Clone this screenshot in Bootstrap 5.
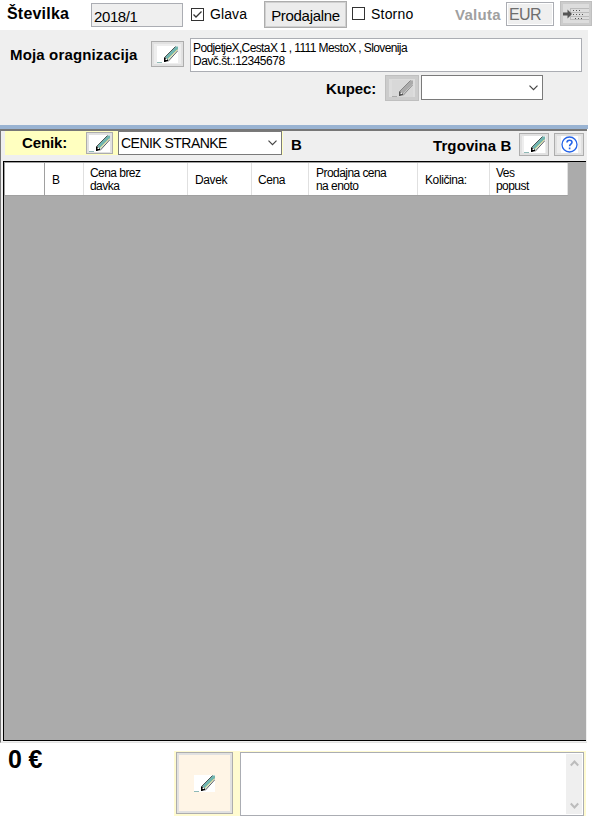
<!DOCTYPE html>
<html lang="sl">
<head>
<meta charset="utf-8">
<meta name="viewport" content="width=device-width, initial-scale=1">
<title>Številka 2018/1</title>
<link href="https://cdn.jsdelivr.net/npm/bootstrap@5.3.0/dist/css/bootstrap.min.css" rel="stylesheet">
<style>
body{width:593px;height:816px;overflow:hidden;background:#fff;color:#000;font-family:"Liberation Sans",Arial,sans-serif;font-size:14px;line-height:16px}
.lbl{white-space:nowrap;flex:none;overflow:visible}
.heavy{font-weight:700;font-size:15px}
.field{flex:none;border:1px solid #abadb3;border-radius:0;background:#fff;color:#000;white-space:nowrap;line-height:1}
.face{flex:none;display:flex;align-items:center;justify-content:center;padding:0;border:1px solid #adadad;border-radius:0;background:#eee;box-shadow:inset 0 0 0 2px #e1e1e1;color:#000;line-height:1}
.face.off{background:#ddd;border-color:#bfbfbf;box-shadow:inset 0 0 0 3px #ccc}
.face svg,.field svg{display:block;flex:none}
.tick{flex:none;width:13px;height:13px;border:1px solid #333;background:#fff}
.tick svg{display:block}
.topbar{height:30px}
.head{height:95px;width:588px;background:#efefef}
.band{height:4px;width:588px;background:#99b3d2}
.body-panel{width:587px;height:614px;background:#efefef;border-top:2px solid #777;border-left:1px solid #777;border-bottom:1px solid #e3e3e3}
.pricebar{height:30px}
.yellow{width:278px;height:24px;background:#ffffc0}
.sheet{margin-left:2px;width:583px;height:580px;border:1px solid #000;border-right:0;background:#ababab}
.heads{height:34px;width:564px;border-top:1px solid #a0a0a0;border-left:1px solid #a0a0a0;border-bottom:1px solid #a0a0a0;background:#fff;font-size:12px;line-height:13px}
.heads>div{flex:none;display:flex;align-items:center;padding-top:2px;border-right:1px solid #e0e0e0;white-space:nowrap;letter-spacing:-.55px}
.sum{font-size:25px;font-weight:700;line-height:28px}
.note{width:412px;height:65px;background:#fffbd0}
/* top bar */
#t1{font-size:16px;width:84px;margin-left:7px;margin-top:6px;letter-spacing:.2px}
#num{width:92px;height:24px;margin-top:3px;background:#efefef;padding:5px 2px;font-size:15px;letter-spacing:-.4px}
#c1{margin:8px 6px 0 8px}
#t2{width:54px;margin-top:6px;letter-spacing:.1px}
#shops{width:83px;height:27px;margin-top:1px;font-size:15px;letter-spacing:-.3px;box-shadow:inset 0 0 0 1px #d0d0d0;background:#ececec;padding-top:1px}
#c2{margin:7px 6px 0 5px}
#t3{width:84px;margin-top:6px;letter-spacing:.2px}
#t4{width:51px;margin-top:7px;color:#a0a0a0;letter-spacing:.3px}
#eur{width:48px;height:24px;margin-top:2px;padding:1px;font-size:16px}
#eur span{display:block;background:#efefef;height:20px;line-height:22px;padding-left:1px;color:#6d6d6d;letter-spacing:-.6px}
#rows{width:32px;height:25px;margin:1px 0 0 6px}
/* organisation and buyer */
#org{padding-top:8px;height:45px}
#t5{width:141px;margin:9px 0 0 10px;letter-spacing:.15px}
#b1{width:33px;height:26px;margin-top:3px}
#addr{width:392px;height:34px;margin-left:6px;padding:3px 2px;font-size:12px;line-height:13px}
#a1{letter-spacing:-.61px}
#a2{letter-spacing:-.5px}
#t6{width:60px;margin:6px 0 0 326px;letter-spacing:-.1px}
#b2{width:34px;height:26px;margin-left:-1px}
#buyerbox{width:122px;height:25px;margin-left:2px;padding-right:4px;border-color:#7a7a7a}
/* price list */
#yel{margin-left:4px}
#t7{width:64px;margin:4px 0 0 17px;letter-spacing:-.1px}
#b3{width:27px;height:22px;margin-top:1px}
#list{width:164px;height:24px;margin-left:5px;padding:0 4px 0 2px;border-color:#7a7a7a;letter-spacing:-.53px}
#t8{width:142px;margin:6px 0 0 8px}
#t9{width:86px;margin-top:7px;letter-spacing:.1px}
#b4{width:30px;height:23px;margin-top:2px}
#b5{width:30px;height:23px;margin:2px 0 0 5px}
.heads .k0{width:40px;border-color:#a0a0a0}
.heads .k1{width:39px;padding-left:7px}
.heads .k2{width:104px;padding-left:6px}
.heads .k3{width:64px;padding-left:7px}
.heads .k4{width:57px;padding-left:6px}
.heads .k5{width:109px;padding-left:7px}
.heads .k6{width:72px;padding-left:7px}
.heads .k7{width:78px;padding-left:6px}
.heads .k3,.heads .k4,.heads .k6{letter-spacing:-.4px}
/* footer */
#total{width:166px;margin:2px 0 0 8px;letter-spacing:-.2px}
.note{margin-top:8px}
#b6{width:57px;height:62px;margin:1px 0 0 2px;background:#fff5e6;box-shadow:inset 0 0 0 2px #e1e1e1}
#memo{width:344px;height:64px;margin:1px 0 0 7px;padding:1px}
#scroll{width:16px;height:60px;background:#efefef;padding:6px 0 5px}
</style>
<script src="https://cdn.jsdelivr.net/npm/bootstrap@5.3.0/dist/js/bootstrap.bundle.min.js"></script>
</head>
<body>
<svg class="d-none">
  <symbol id="pen" viewBox="0 0 21 17">
    <path d="M0 0h21v17H0z" fill="#fff"/><path d="M0 16.500h5" stroke="#8fb9b6"/>
    <path d="M8 11 18.500.5H21v3L11 14z" fill="#71b5b0"/>
    <path d="M10.500 13.500 20.500 3.500" stroke="#e3dc91"/>
    <path d="M7.500 11.500 18.500.5M11 15.500 21 4.500" stroke="#333" stroke-width=".8" fill="none"/>
    <path d="M7 11.500h1.500L11 14v1l-3 1H7z" fill="#000"/><path d="M8.500 12.500h1.500v1.500H8.500z" fill="#fff"/>
  </symbol>
  <symbol id="penoff" viewBox="0 0 21 17">
    <path d="M0 0h21v17H0z" fill="#d8d8d8"/><path d="M0 16.500h5" stroke="#aaa"/>
    <path d="M8 11 18.500.5H21v3L11 14z" fill="#aaa"/>
    <path d="M7.500 11.500 18.500.5M11 15.500 21 4.500" stroke="#777" stroke-width=".8" fill="none"/>
    <path d="M7 11.500h1.500L11 14v1l-3 1H7z" fill="#555"/><path d="M8.500 12.500h1.500v1.500H8.500z" fill="#eee"/>
  </symbol>
  <symbol id="down" viewBox="0 0 9 6"><path d="M.5.7 4.500 4.700 8.500.7" fill="none" stroke="#444" stroke-width="1.200"/></symbol>
</svg>

<div class="topbar d-flex align-items-start">
  <div class="lbl heavy" id="t1">Številka</div>
  <div class="field" id="num">2018/1</div>
  <div class="tick" id="c1"><svg width="11" height="11"><path d="M1.500 5.500 4 8 9.500 2.500" fill="none" stroke="#333" stroke-width="1.300"/></svg></div>
  <div class="lbl" id="t2">Glava</div>
  <button class="face" id="shops">Prodajalne</button>
  <div class="tick" id="c2"></div>
  <div class="lbl" id="t3">Storno</div>
  <div class="lbl heavy" id="t4">Valuta</div>
  <div class="field" id="eur"><span>EUR</span></div>
  <button class="face off" id="rows"><svg width="26" height="19"><path d="M0 0h26v19H0z" fill="#ddd"/><path d="M7.500 4v12M7 4.500h19M7 8.500h19M7 12.500h19M7 15.500h19" stroke="#bbb"/><path d="M0 8.500h4.500V5.500L9 10 4.500 14.500V11.500H0z" fill="#555"/><path d="M10 6.500h7M10 10.500h11M12 14.500h8" stroke="#555" stroke-dasharray="1 2"/></svg></button>
</div>

<div class="head">
  <div class="d-flex align-items-start" id="org">
    <div class="lbl heavy" id="t5">Moja oragnizacija</div>
    <button class="face" id="b1"><svg width="21" height="17"><use href="#pen"/></svg></button>
    <div class="field" id="addr"><div id="a1">PodjetjeX,CestaX 1 , 1111 MestoX , Slovenija</div><div id="a2">Davč.št.:12345678</div></div>
  </div>
  <div class="d-flex align-items-start" id="buyer">
    <div class="lbl heavy" id="t6">Kupec:</div>
    <button class="face off" id="b2"><svg width="21" height="17"><use href="#penoff"/></svg></button>
    <div class="field d-flex align-items-center justify-content-end" id="buyerbox"><svg width="9" height="6"><use href="#down"/></svg></div>
  </div>
</div>
<div class="band"></div>

<div class="body-panel">
  <div class="pricebar d-flex align-items-start">
    <div class="yellow d-flex align-items-start" id="yel">
      <div class="lbl heavy" id="t7">Cenik:</div>
      <button class="face" id="b3"><svg width="21" height="17"><use href="#pen"/></svg></button>
      <div class="field d-flex align-items-center justify-content-between" id="list"><span>CENIK STRANKE</span><svg width="9" height="6"><use href="#down"/></svg></div>
    </div>
    <div class="lbl heavy" id="t8">B</div>
    <div class="lbl heavy" id="t9">Trgovina B</div>
    <button class="face" id="b4"><svg width="21" height="17"><use href="#pen"/></svg></button>
    <button class="face" id="b5"><svg width="17" height="17"><path d="M0 0h17v17H0z" fill="#fff"/><circle cx="8.500" cy="8.500" r="7.500" fill="#fff" stroke="#2463e8" stroke-width="1.300"/><path d="M6 6.500C6 3.500 11 3.500 11 6.300 11 8 8.600 8.200 8.600 10.200M8.600 11.500v1.700" fill="none" stroke="#2463e8" stroke-width="1.600"/></svg></button>
  </div>
  <div class="sheet">
    <div class="heads d-flex">
      <div class="k0"></div><div class="k1">B</div><div class="k2">Cena brez<br>davka</div><div class="k3">Davek</div><div class="k4">Cena</div><div class="k5">Prodajna cena<br>na enoto</div><div class="k6">Količina:</div><div class="k7">Ves<br>popust</div>
    </div>
  </div>
</div>

<div class="d-flex align-items-start" id="foot">
  <div class="lbl sum" id="total">0 €</div>
  <div class="note d-flex align-items-start">
    <button class="face" id="b6"><svg width="21" height="17"><use href="#pen"/></svg></button>
    <div class="field d-flex justify-content-end" id="memo">
      <div class="d-flex flex-column justify-content-between align-items-center" id="scroll">
        <svg width="9" height="7"><path d="M.8 5.500 4.500 1.500 8.200 5.500" fill="none" stroke="#bcbcbc" stroke-width="2"/></svg>
        <svg width="9" height="7"><path d="M.8 1.500 4.500 5.500 8.200 1.500" fill="none" stroke="#bcbcbc" stroke-width="2"/></svg>
      </div>
    </div>
  </div>
</div>
</body>
</html>
